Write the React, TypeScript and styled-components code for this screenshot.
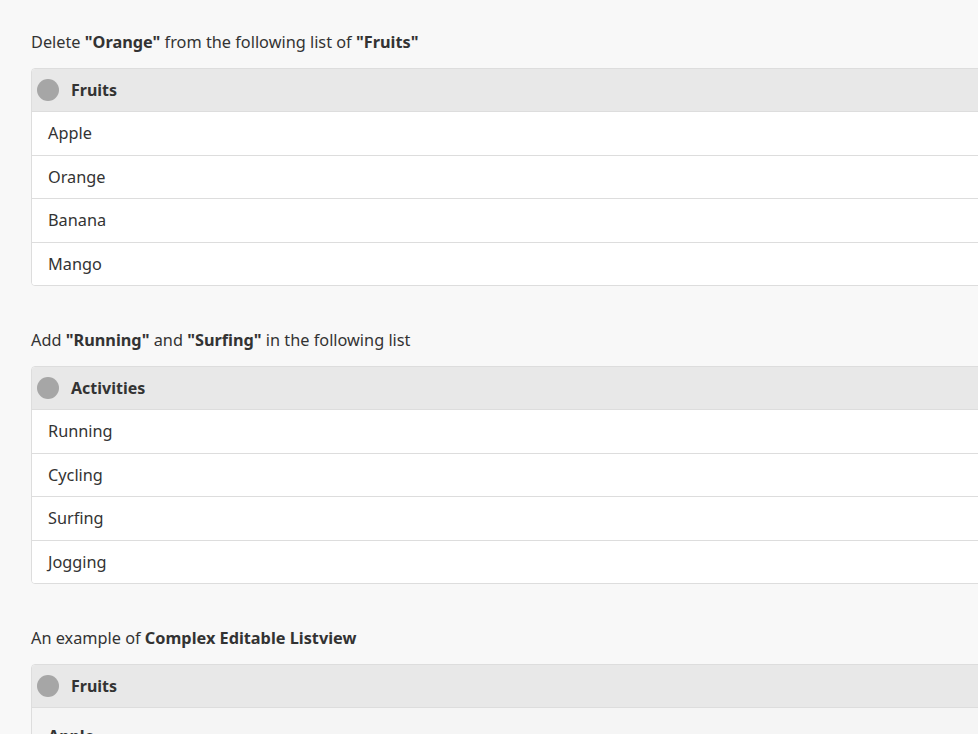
import React from "react";
import styled, { createGlobalStyle } from "styled-components";

const Global = createGlobalStyle`
  html, body { margin: 0; padding: 0; overflow: hidden; }
  body {
    background: #f8f8f8;
    font-family: "Segoe UI", "Noto Sans", "Open Sans", sans-serif;
    color: #333;
  }
`;

const Page = styled.div`
  padding: 30px 0 0 31px;
  width: 1100px;
  display: flex;
  flex-direction: column;
`;

const Section = styled.section`
  display: flex;
  flex-direction: column;
  gap: 14px;
  margin-bottom: 42px;
`;

const Label = styled.p`
  margin: 0;
  font-size: 16.3px;
  line-height: 24px;
  color: #333;
  b { font-weight: 700; }
`;

const Panel = styled.div`
  border: 1px solid #dddddd;
  border-radius: 4px;
  background: #ffffff;
  overflow: hidden;
`;

const Header = styled.div`
  display: flex;
  align-items: center;
  gap: 12px;
  height: 42px;
  padding: 0 5px;
  background: #e8e8e8;
  font-weight: 700;
  font-size: 16px;
  color: #333;
`;

const Dot = styled.span`
  width: 22px;
  height: 22px;
  border-radius: 50%;
  background: #a6a6a6;
  flex: none;
`;

const Row = styled.div<{ $complex?: boolean }>`
  border-top: 1px solid #dddddd;
  padding: ${(p) => (p.$complex ? "16px 16px 9.25px" : "9.25px 16px")};
  line-height: 24px;
  font-size: 16.3px;
  background: ${(p) => (p.$complex ? "#f5f5f5" : "#ffffff")};
  font-weight: ${(p) => (p.$complex ? 700 : 400)};
  color: #333;
`;

type ListProps = { title: string; items: string[]; complex?: boolean };

const List = ({ title, items, complex }: ListProps) => (
  <Panel>
    <Header>
      <Dot />
      {title}
    </Header>
    {items.map((it) => (
      <Row key={it} $complex={complex}>
        {it}
      </Row>
    ))}
  </Panel>
);

export default function App() {
  return (
    <>
      <Global />
      <Page>
        <Section>
          <Label>
            Delete <b>"Orange"</b> from the following list of <b>"Fruits"</b>
          </Label>
          <List title="Fruits" items={["Apple", "Orange", "Banana", "Mango"]} />
        </Section>
        <Section>
          <Label>
            Add <b>"Running"</b> and <b>"Surfing"</b> in the following list
          </Label>
          <List title="Activities" items={["Running", "Cycling", "Surfing", "Jogging"]} />
        </Section>
        <Section>
          <Label>
            An example of <b>Complex Editable Listview</b>
          </Label>
          <List title="Fruits" items={["Apple", "Orange"]} complex />
        </Section>
      </Page>
    </>
  );
}
